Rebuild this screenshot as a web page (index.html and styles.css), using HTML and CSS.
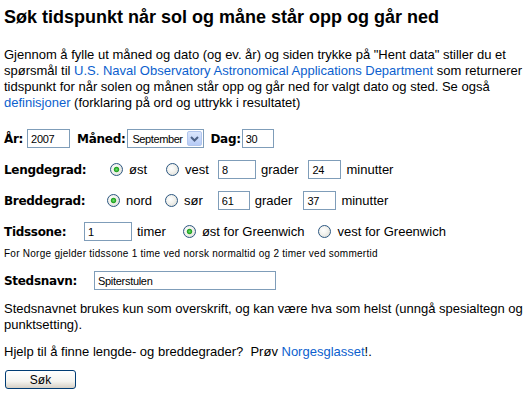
FILE: index.html
```html
<!DOCTYPE html>
<html lang="no">
<head>
    <meta charset="UTF-8">
    <title>Søk tidspunkt når sol og måne står opp og går ned</title>
    <link rel="stylesheet" href="styles.css">
</head>
<body>
    <h1>Søk tidspunkt når sol og måne står opp og går ned</h1>
    <p class="intro">Gjennom å fylle ut måned og dato (og ev. år) og siden trykke på "Hent data" stiller du et spørsmål til <a href="#">U.S. Naval Observatory Astronomical Applications Department</a> som returnerer tidspunkt for når solen og månen står opp og går ned for valgt dato og sted. Se også <a href="#">definisjoner</a> (forklaring på ord og uttrykk i resultatet)</p>

    <form id="sunMoonForm">
        <div class="row">
            <label class="lbl" for="year">År:</label>
            <input type="text" id="year" class="field w-year" value="2007">
            <label class="lbl lbl-month" for="month">Måned:</label>
            <div class="combo">
                <select id="month" class="combo-select">
                    <option>Januar</option>
                    <option>Februar</option>
                    <option>Mars</option>
                    <option>April</option>
                    <option>Mai</option>
                    <option>Juni</option>
                    <option>Juli</option>
                    <option>August</option>
                    <option selected>September</option>
                    <option>Oktober</option>
                    <option>November</option>
                    <option>Desember</option>
                </select>
                <span class="combo-btn">
                    <svg width="9" height="6" viewBox="0 0 9 6"><path d="M1 1 L4.5 4.5 L8 1" fill="none" stroke="#4d6185" stroke-width="2"/></svg>
                </span>
            </div>
            <label class="lbl lbl-day" for="day">Dag:</label>
            <input type="text" id="day" class="field w-day" value="30">
        </div>

        <div class="row">
            <span class="lbl lbl-lon">Lengdegrad:</span>
            <label class="opt"><input type="radio" name="ew" checked> øst</label>
            <label class="opt opt-west"><input type="radio" name="ew"> vest</label>
            <input type="text" class="field w-deg" value="8">
            <span class="unit">grader</span>
            <input type="text" class="field w-min" value="24">
            <span class="unit">minutter</span>
        </div>

        <div class="row">
            <span class="lbl lbl-lat">Breddegrad:</span>
            <label class="opt"><input type="radio" name="ns" checked> nord</label>
            <label class="opt opt-south"><input type="radio" name="ns"> sør</label>
            <input type="text" class="field w-deg2" value="61">
            <span class="unit">grader</span>
            <input type="text" class="field w-min2" value="37">
            <span class="unit">minutter</span>
        </div>

        <div class="row">
            <span class="lbl lbl-tz">Tidssone:</span>
            <input type="text" class="field w-tz" value="1">
            <span class="unit">timer</span>
            <label class="opt opt-east"><input type="radio" name="gw" checked> øst for Greenwich</label>
            <label class="opt opt-westgw"><input type="radio" name="gw"> vest for Greenwich</label>
        </div>
        <p class="note">For Norge gjelder tidssone 1 time ved norsk normaltid og 2 timer ved sommertid</p>

        <div class="row row-place">
            <label class="lbl lbl-place" for="place">Stedsnavn:</label>
            <input type="text" id="place" class="field w-place" value="Spiterstulen">
        </div>

        <p class="text">Stedsnavnet brukes kun som overskrift, og kan være hva som helst (unngå spesialtegn og punktsetting).</p>
        <p class="text help">Hjelp til å finne lengde- og breddegrader?&nbsp; Prøv <a href="#">Norgesglasset</a>!.</p>

        <button type="submit" class="btn">Søk</button>
    </form>
</body>
</html>
```

FILE: styles.css
```css
body {
    font-family: "Liberation Sans", Arial, sans-serif;
    font-size: 13px;
    line-height: 16px;
    color: #000;
    background: #fff;
    margin: 0;
    padding: 6px 0 0 4px;
}
a {
    color: #0c5fce;
    text-decoration: none;
}
h1 {
    font-size: 18px;
    line-height: 22px;
    font-weight: bold;
    margin: 0 0 19px 0;
}
.intro {
    margin: 0 0 18px 0;
}
.row {
    display: flex;
    align-items: center;
    height: 19px;
    margin-bottom: 12px;
    white-space: nowrap;
}
.row > * {
    flex-shrink: 0;
}
.lbl {
    font-family: "DejaVu Sans", Verdana, sans-serif;
    font-weight: bold;
    font-size: 12px;
    letter-spacing: -0.3px;
}
.lbl-month { margin-left: 7px; margin-right: 2px; }
.lbl-day { margin-left: 6px; margin-right: 1px; }
.lbl-lon { width: 106px; }
.lbl-lat { width: 103px; }
.lbl-tz { width: 80px; }
.lbl-place { width: 90px; }
.field {
    font-family: "Liberation Sans", Tahoma, sans-serif;
    font-size: 11px;
    letter-spacing: -0.3px;
    height: 19px;
    box-sizing: border-box;
    border: 1px solid #7f9db9;
    padding: 1px 3px;
    margin: 0;
    background: #fff;
    outline: none;
}
.w-year { width: 43px; margin-left: 4px; }
.w-day { width: 32px; }
.w-deg { width: 38px; margin-left: 9px; }
.w-deg2 { width: 32px; margin-left: 15px; }
.w-min { width: 33px; margin-left: 10px; }
.w-min2 { width: 33px; margin-left: 11px; }
.w-tz { width: 48px; }
.w-place { width: 182px; }
.unit { margin-left: 5px; }
.combo {
    position: relative;
    width: 77px;
    height: 19px;
}
.combo-select {
    appearance: none;
    -webkit-appearance: none;
    width: 77px;
    height: 19px;
    box-sizing: border-box;
    border: 1px solid #7f9db9;
    border-radius: 0;
    background: #fff;
    font-family: "Liberation Sans", Tahoma, sans-serif;
    font-size: 11px;
    letter-spacing: -0.4px;
    padding: 0 0 0 4px;
    margin: 0;
}
/* XP style drop button drawn over the select's right end */
.combo-btn {
    position: absolute;
    top: 2px;
    right: 2px;
    width: 15px;
    height: 15px;
    box-sizing: border-box;
    border: 1px solid #b2c6ee;
    border-radius: 2px;
    background: linear-gradient(#dbe6fc, #b6cbf6);
    display: flex;
    align-items: center;
    justify-content: center;
    pointer-events: none;
}
.opt {
    display: flex;
    align-items: center;
}
.opt input {
    appearance: none;
    -webkit-appearance: none;
    width: 13px;
    height: 13px;
    margin: 0 6px 0 0;
    border: 1px solid #2c5781;
    border-radius: 50%;
    box-sizing: border-box;
    background: radial-gradient(circle at 40% 40%, #fff 0, #f3f3ef 40%, #d8d8d0 100%);
}
.opt input:checked {
    background: radial-gradient(circle, #6ee26e 0, #21a121 2.2px, transparent 3.2px),
                radial-gradient(circle at 40% 40%, #fff 0, #f3f3ef 40%, #d8d8d0 100%);
}
.opt-west { margin-left: 19px; }
.opt-south { margin-left: 13px; }
.opt-east { margin-left: 17px; }
.opt-westgw { margin-left: 14px; }
.note {
    font-family: "Liberation Sans", Verdana, sans-serif;
    font-size: 10px;
    line-height: 12px;
    letter-spacing: 0.26px;
    margin: -5px 0 11px 0;
}
.row-place { margin-bottom: 11px; }
.text {
    margin: 0 0 11px 0;
}
.help { margin-bottom: 10px; }
.btn {
    display: block;
    width: 71px;
    height: 19px;
    margin-left: 1px;
    padding: 0;
    border: 1px solid #003c74;
    border-radius: 3px;
    background: linear-gradient(#fff 0%, #f4f4f0 60%, #d6d0c5 100%);
    font-family: "Liberation Sans", Tahoma, sans-serif;
    font-size: 12px;
    color: #000;
}
```
